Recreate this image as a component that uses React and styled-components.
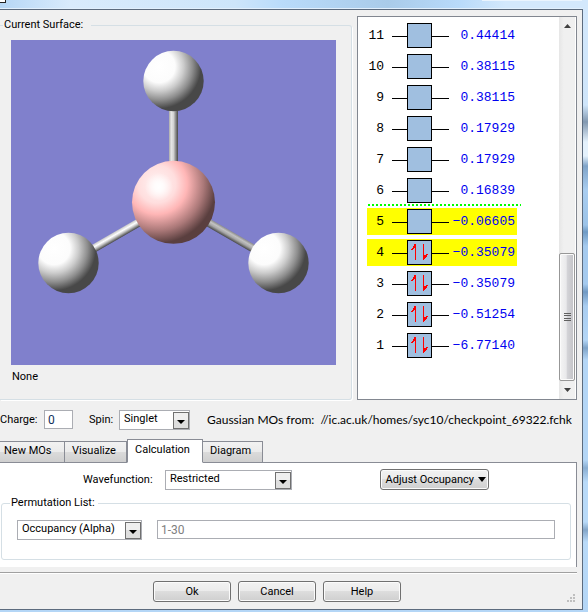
import React, { useState } from 'react';
import styled, { createGlobalStyle, css } from 'styled-components';


const GlobalStyle = createGlobalStyle`
    * {
        box-sizing: border-box;
    }

    body {
        margin: 0;
        background: #b4d4f2;
        color: #000;
        font-family: Roboto, "Liberation Sans", sans-serif;
        font-size: 11px;
        line-height: 16px;
    }

    button, input, select {
        font: inherit;
        color: inherit;
        margin: 0;
    }
`;


// Glass frame around the dialog
const Desktop = styled.div`
    padding: 8px 5px 2px 0;
    background:
        linear-gradient(#fff, #fff) 0 0 / 5px 2px no-repeat,
        linear-gradient(#222, #222) 0 0 / 6px 3px no-repeat,
        linear-gradient(#eaf4fe, #eaf4fe) calc(100% - 6px) 0 / 100px 1px no-repeat,
        linear-gradient(90deg, #b5d6f5 0%, #d9ebfc 12%, #cde5fa 40%, #b9dbfa 48%, #a9cbe9 66%, #b8dafa 78%, #d3e8fc 86%, #d3e8fc 100%) top / 100% 9px no-repeat,
        linear-gradient(180deg, #d3e8fc 0, #cfe5fa 105px, #8298b0 122px, #e4f1fc 142px, #e4f1fc 156px, #7fa3c8 166px, #a9cdf0 190px, #9cc3e8 225px, #6f9ac4 232px, #a5caee 246px, #a5caee 284px, #7199c2 292px, #a9cdf0 306px, #b4d6f6 340px, #7ea3c8 348px, #b4d6f6 360px, #b4d6f6 460px, #8aaed2 468px, #b9daf8 482px, #b9daf8 522px, #83a5c8 530px, #b9daf8 542px, #b4d6f6 100%);
`;


const Dialog = styled.main`
    background: #f0f0f0;
    border: solid #5c6b7e;
    border-width: 1px 1px 1px 0;
    box-shadow: 0 -1px 0 #e2f0fd;
    margin-top: 1px;
`;


const TopArea = styled.div`
    display: flex;
    gap: 5px;
    padding: 6px 5px 0 0;
`;


const Group = styled.fieldset`
    min-width: 0;
    margin: 0;
    border: 1px solid #d5dfe5;
    border-radius: 3px;
`;


const SurfaceGroup = styled(Group)`
    flex: 1;
    margin-top: 1px;
    padding: 7px 15px 14px 11px;
    border-left: none;
    border-top-left-radius: 0;
    border-bottom-left-radius: 0;
    box-shadow: 1px 1px 0 #fff;

    > legend {
        margin-left: -8px;
    }
`;


const Legend = styled.legend`
    padding: 0 8px 0 1px;
`;


const Viewport = styled.div`
    height: 325px;
    background: #8080cc;

    svg {
        display: block;
        width: 100%;
        height: 100%;
    }
`;


const SurfaceName = styled.p`
    margin: 4px 1px 0;
`;


const OrbitalPanel = styled.section`
    display: flex;
    width: 220px;
    height: 384px;
    padding-right: 1px;
    background: #fff;
    border: 1px solid #828790;
`;


const OrbitalList = styled.ol`
    flex: 1;
    display: flex;
    flex-direction: column;
    gap: 4px;
    margin: 0;
    padding: 5px 0 0 9px;
    list-style: none;
    font-family: "Liberation Mono", monospace;
    font-size: 13px;
`;


const OrbitalRow = styled.li`
    position: relative;
    display: flex;
    align-items: center;
    width: 150px;
    height: 27px;
    background: ${props => (props.$marked ? '#ffff00' : 'transparent')};

    /* dotted line between virtual and occupied levels */
    ${props => props.$fermi && css`
        &::after {
            content: '';
            position: absolute;
            left: 1px;
            top: 27px;
            width: 153px;
            height: 2px;
            background: repeating-linear-gradient(90deg, #00ff00 0 2px, transparent 2px 4px);
        }
    `}
`;


const OrbitalNumber = styled.span`
    width: 17px;
    margin-right: 8px;
    text-align: right;
`;


const Energy = styled.span`
    flex: 1;
    padding-right: 2px;
    color: #0000f0;
    text-align: right;
    white-space: nowrap;
`;


const ScrollBar = styled.div`
    display: flex;
    flex-direction: column;
    width: 16px;
    background: linear-gradient(90deg, #e6e6e6, #f0f0f0 30%);
`;


const ScrollArrow = styled.button`
    display: flex;
    align-items: center;
    justify-content: center;
    height: 18px;
    padding: 0;
    border: none;
    background: none;
`;


const ScrollThumb = styled.div`
    display: flex;
    align-items: center;
    justify-content: center;
    height: 128px;
    margin-top: auto;
    border: 1px solid #979797;
    border-radius: 2px;
    background: linear-gradient(90deg, #f5f5f5, #e9e9eb 45%, #d4d4d8 50%, #c2c2c6);
    box-shadow: inset 0 0 0 1px #fbfbfb;
`;


const StateRow = styled.div`
    display: flex;
    align-items: center;
    height: 19px;
    margin-top: 10px;
    white-space: nowrap;

    > * {
        flex-shrink: 0;
    }
`;


const TextBox = styled.input`
    min-width: 0;
    height: 19px;
    padding: 0 3px;
    border: 1px solid #abadb3;
    border-radius: 0;
    background: #fff;
    font-size: 12px;
    outline: none;

    &:disabled {
        color: #808080;
    }
`;


const ChargeBox = styled(TextBox)`
    width: 29px;
    margin-right: 16px;
    color: #10305c;
`;


const ChargeLabel = styled.label`
    width: 44px;
`;


const SpinLabel = styled.label`
    width: 30px;
`;


const SelectFrame = styled.span`
    display: grid;
    width: ${props => props.$width};
    height: 19px;

    > * {
        grid-area: 1 / 1;
    }

    > svg {
        align-self: center;
        justify-self: end;
        margin-right: 1px;
        pointer-events: none;
    }
`;


const SelectBox = styled.select`
    appearance: none;
    min-width: 0;
    padding: 0 18px 2px 4px;
    border: 1px solid #abadb3;
    border-radius: 0;
    background: #fff;
    outline: none;
`;


const Source = styled.span`
    margin-left: 17px;
    font-family: Lato, sans-serif;
    font-size: 12px;
`;


const TabList = styled.div`
    display: flex;
    align-items: flex-end;
    height: 24px;
    margin: 10px 0 -1px;
`;


const Tab = styled.button`
    width: ${props => props.$width};
    height: 22px;
    padding: 0 0 2px 7px;
    border: 1px solid #898c95;
    border-left: none;
    background: linear-gradient(#f2f2f2, #ebebeb 48%, #dbdbdb 50%, #cfcfcf);
    text-align: left;

    &:first-child {
        padding-left: 4px;
    }

    ${props => props.$active && css`
        height: 24px;
        border-left: 1px solid #898c95;
        border-bottom-color: #fff;
        background: #fff;
        z-index: 1;
    `}
`;


const TabPanel = styled.div`
    margin-right: 5px;
    padding: 6px 5px 7px 1px;
    border: solid #898c95;
    border-width: 1px 1px 0 0;
    background: #fff;
`;


const WaveRow = styled.div`
    display: flex;
    align-items: center;
    height: 21px;
    padding: 0 82px;

    label {
        width: 82px;
    }
`;


const Button = styled.button`
    height: 21px;
    width: ${props => props.$width || '78px'};
    padding: 0;
    border: 1px solid #707070;
    border-radius: 3px;
    background: linear-gradient(#f2f2f2, #ebebeb 48%, #dddddd 50%, #cfcfcf);
    box-shadow: inset 0 0 0 1px #fbfbfb;
`;


const MenuButton = styled(Button)`
    display: flex;
    align-items: center;
    justify-content: flex-end;
    gap: 4px;
    padding-right: 2px;
    margin-left: auto;
    white-space: nowrap;
`;


const PermutationGroup = styled(Group)`
    margin-top: 5px;
    padding: 9px 15px 20px;

    > legend {
        margin-left: -7px;
        padding-right: 3px;
    }
`;


const PermutationRow = styled.div`
    display: flex;
    gap: 15px;

    input {
        flex: 1;
    }
`;


const Footer = styled.footer`
    display: flex;
    margin: 5px 5px 0 0;
    padding: 7px 2px 7px 0;
    border-top: 1px solid #a0a0a0;
    box-shadow: inset 0 1px 0 #fff;
`;


const FooterButtons = styled.div`
    flex: 1;
    display: flex;
    justify-content: center;
    gap: 7px;
    padding-top: 1px;
`;


const Grip = styled.svg`
    align-self: flex-end;
    margin-left: 13px;
`;


const orbitals = [
    { n: 11, energy: '0.44414' },
    { n: 10, energy: '0.38115' },
    { n: 9, energy: '0.38115' },
    { n: 8, energy: '0.17929' },
    { n: 7, energy: '0.17929' },
    { n: 6, energy: '0.16839', fermi: true },
    { n: 5, energy: '−0.06605', marked: true },
    { n: 4, energy: '−0.35079', marked: true, filled: true },
    { n: 3, energy: '−0.35079', filled: true },
    { n: 2, energy: '−0.51254', filled: true },
    { n: 1, energy: '−6.77140', filled: true },
];

const tabs = [
    { name: 'New MOs', width: '65px' },
    { name: 'Visualize', width: '62px' },
    { name: 'Calculation', width: '76px' },
    { name: 'Diagram', width: '60px' },
];


function Molecule() {
    return (
        <svg viewBox="0 0 325 325" role="img" aria-label="BH3">
            <defs>
                <radialGradient id="hydrogen" cx="0.26" cy="0.26" r="0.74">
                    <stop offset="0" stopColor="#ffffff" />
                    <stop offset="0.36" stopColor="#fcfcfc" />
                    <stop offset="0.55" stopColor="#cccccc" />
                    <stop offset="0.75" stopColor="#8e8e8e" />
                    <stop offset="0.94" stopColor="#484848" />
                </radialGradient>
                <radialGradient id="boron" cx="0.3" cy="0.28" r="0.76">
                    <stop offset="0" stopColor="#fff4f4" />
                    <stop offset="0.3" stopColor="#ffdede" />
                    <stop offset="0.48" stopColor="#ffb6b6" />
                    <stop offset="0.74" stopColor="#aa7878" />
                    <stop offset="0.94" stopColor="#5a3f3f" />
                </radialGradient>
                <radialGradient id="shine">
                    <stop offset="0" stopColor="#ffffff" />
                    <stop offset="0.35" stopColor="#ffffff" stopOpacity="0.8" />
                    <stop offset="1" stopColor="#ffffff" stopOpacity="0" />
                </radialGradient>
                <linearGradient id="bondUp">
                    <stop offset="0" stopColor="#a8a8a8" />
                    <stop offset="0.25" stopColor="#e6e6e6" />
                    <stop offset="0.5" stopColor="#d2d2d2" />
                    <stop offset="0.75" stopColor="#8a8a8a" />
                    <stop offset="1" stopColor="#484848" />
                </linearGradient>
                <linearGradient id="bondLeft" x1="0" y1="0" x2="0" y2="1">
                    <stop offset="0" stopColor="#c8c8c8" />
                    <stop offset="0.35" stopColor="#ffffff" />
                    <stop offset="0.6" stopColor="#c4c4c4" />
                    <stop offset="1" stopColor="#484848" />
                </linearGradient>
                <linearGradient id="bondRight" x1="0" y1="0" x2="0" y2="1">
                    <stop offset="0" stopColor="#8c8c8c" />
                    <stop offset="0.3" stopColor="#c2c2c2" />
                    <stop offset="0.6" stopColor="#a6a6a6" />
                    <stop offset="1" stopColor="#484848" />
                </linearGradient>
            </defs>
            <rect x="158" y="60" width="9" height="70" fill="url(#bondUp)" />
            <rect x="-100" y="-4" width="70" height="8" fill="url(#bondLeft)" transform="translate(162.5 162.5) rotate(-30)" />
            <rect x="30" y="-4" width="70" height="8" fill="url(#bondRight)" transform="translate(162.5 162.5) rotate(30)" />
            <circle cx="162.5" cy="41" r="30.2" fill="url(#hydrogen)" />
            <circle cx="57.5" cy="223" r="30.2" fill="url(#hydrogen)" />
            <circle cx="267.5" cy="223" r="30.2" fill="url(#hydrogen)" />
            <circle cx="162.5" cy="162.3" r="41.5" fill="url(#boron)" />
            <circle cx="148" cy="147" r="14" fill="url(#shine)" />
        </svg>
    );
}


// Level line with its box and the electron pair
function Level({ filled }) {
    return (
        <svg width="57" height="25" shapeRendering="crispEdges" aria-hidden="true">
            <path d="M0 13.5H57" stroke="#000" />
            <rect x="15.5" y="0.5" width="24" height="24" fill="#a0bfe0" stroke="#000" />
            {filled && (
                <g fill="#ff0000">
                    <path d="M23 4h1v16h-1zM22 4h1v4h-1zM21 6h1v3h-1zM20 8h1v2h-1zM19 9h1v1h-1z" />
                    <path d="M31 4h1v16h-1zM32 15h1v4h-1zM33 15h1v3h-1zM34 14h1v3h-1zM35 14h1v1h-1z" />
                </g>
            )}
        </svg>
    );
}


function Select({ id, width, options, label }) {
    return (
        <SelectFrame $width={width}>
            <SelectBox id={id} aria-label={label}>
                {options.map(option => <option key={option}>{option}</option>)}
            </SelectBox>
            <svg width="16" height="17" aria-hidden="true">
                <rect x="0.5" y="0.5" width="15" height="16" fill="#dedede" stroke="#707070" />
                <path d="M1 1h14v7H1z" fill="#efefef" />
                <path d="M4 8h8l-4 4z" fill="#000" />
            </svg>
        </SelectFrame>
    );
}


export default function App() {
    const [activeTab, setActiveTab] = useState('Calculation');

    return (
        <>
            <GlobalStyle />
            <Desktop>
                <Dialog>
                    <TopArea>
                        <SurfaceGroup>
                            <Legend>Current Surface:</Legend>
                            <Viewport><Molecule /></Viewport>
                            <SurfaceName>None</SurfaceName>
                        </SurfaceGroup>

                        <OrbitalPanel>
                            <OrbitalList>
                                {orbitals.map(({ n, energy, marked, filled, fermi }) => (
                                    <OrbitalRow key={n} $marked={marked} $fermi={fermi}>
                                        <OrbitalNumber>{n}</OrbitalNumber>
                                        <Level filled={filled} />
                                        <Energy>{energy}</Energy>
                                    </OrbitalRow>
                                ))}
                            </OrbitalList>
                            <ScrollBar>
                                <ScrollArrow aria-label="Scroll up">
                                    <svg width="7" height="4"><path d="M0 4L3.5 0L7 4z" fill="#404040" /></svg>
                                </ScrollArrow>
                                <ScrollThumb>
                                    <svg width="7" height="9" shapeRendering="crispEdges">
                                        <path d="M0 0.5h7M0 2.5h7M0 5.5h7M0 7.5h7" stroke="#606060" />
                                    </svg>
                                </ScrollThumb>
                                <ScrollArrow aria-label="Scroll down">
                                    <svg width="7" height="4"><path d="M0 0L3.5 4L7 0z" fill="#404040" /></svg>
                                </ScrollArrow>
                            </ScrollBar>
                        </OrbitalPanel>
                    </TopArea>

                    <StateRow>
                        <ChargeLabel htmlFor="charge">Charge:</ChargeLabel>
                        <ChargeBox id="charge" defaultValue="0" />
                        <SpinLabel htmlFor="spin">Spin:</SpinLabel>
                        <Select id="spin" width="71px" options={['Singlet']} />
                        <Source>Gaussian MOs from:&nbsp; //ic.ac.uk/homes/syc10/checkpoint_69322.fchk</Source>
                    </StateRow>

                    <TabList role="tablist">
                        {tabs.map(({ name, width }) => (
                            <Tab
                                key={name}
                                role="tab"
                                aria-selected={name === activeTab}
                                $active={name === activeTab}
                                $width={width}
                                onClick={() => setActiveTab(name)}
                            >
                                {name}
                            </Tab>
                        ))}
                    </TabList>

                    <TabPanel role="tabpanel">
                        <WaveRow>
                            <label htmlFor="wavefunction">Wavefunction:</label>
                            <Select id="wavefunction" width="127px" options={['Restricted']} />
                            <MenuButton $width="109px">
                                Adjust Occupancy
                                <svg width="8" height="5"><path d="M0 0h8L4 5z" fill="#000" /></svg>
                            </MenuButton>
                        </WaveRow>

                        <PermutationGroup>
                            <Legend>Permutation List:</Legend>
                            <PermutationRow>
                                <Select label="Permutation type" width="125px" options={['Occupancy (Alpha)']} />
                                <TextBox aria-label="Permutation" defaultValue="1-30" disabled />
                            </PermutationRow>
                        </PermutationGroup>
                    </TabPanel>

                    <Footer>
                        <FooterButtons>
                            <Button>Ok</Button>
                            <Button>Cancel</Button>
                            <Button>Help</Button>
                        </FooterButtons>
                        <Grip width="8" height="8" shapeRendering="crispEdges" aria-hidden="true">
                            <path d="M6 0h2v2H6zM3 3h2v2H3zM6 3h2v2H6zM0 6h2v2H0zM3 6h2v2H3zM6 6h2v2H6z" fill="#bfbfbf" />
                        </Grip>
                    </Footer>
                </Dialog>
            </Desktop>
        </>
    );
}
